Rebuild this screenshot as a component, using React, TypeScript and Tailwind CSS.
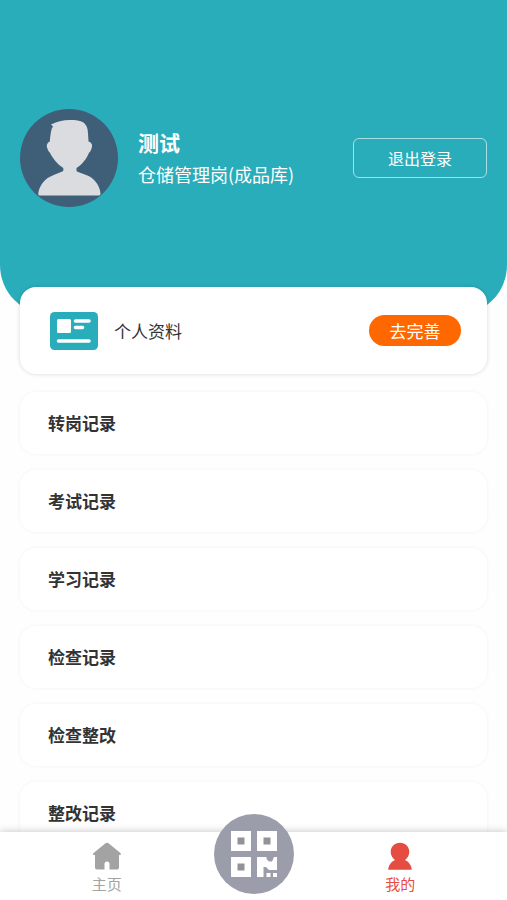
import React from 'react';

const records = ['转岗记录', '考试记录', '学习记录', '检查记录', '检查整改', '整改记录'];

const Avatar: React.FC = () => (
  <svg viewBox="0 0 98 98" className="size-[98px] shrink-0" role="img" aria-label="头像">
    <circle cx="49" cy="49" r="49" fill="#3f5f78" />
    <path
      fill="#dadcdf"
      d="M31 15.500C36 13 43 11 50 11C56 11 60 11.500 63.500 13.500C66.500 16 67.700 19 68 24L68.500 32.500C71 33.500 72.500 35 72 37.500C71.500 40.500 70.500 42.500 69 43.800C67.500 47.500 66 50 63.500 52.800C61.500 55.500 59 57.500 56.500 59V62C59 64 65 65 70 67.800C76 71.500 80 78 80.500 84.500Q80.500 86.500 79 86.500H19.500Q18 86.500 18.300 84.500C19 78 23.500 71 30 67.800C35 65 40 64 43.300 62V59C40 57 37 54 34.500 51C32.500 48.500 31 46 30 43.800C28.500 42.500 27.500 40.500 26.800 37.500C26.500 35 28 33.500 29.800 32.500C30.200 28 30.500 24 31.800 19.500L33 17.500Z"
    />
  </svg>
);

const CardIcon: React.FC = () => (
  <svg viewBox="0 0 48 38" className="h-[38px] w-12 shrink-0" aria-hidden="true">
    <rect width="48" height="38" rx="4.500" fill="#2aadbb" />
    <rect x="7" y="7" width="14" height="14" rx="1.500" fill="#fff" />
    <path d="M25.500 9H39M25.500 15.500H32.500M8.500 29H39" stroke="#fff" strokeWidth="3.600" strokeLinecap="round" />
  </svg>
);

const HomeIcon: React.FC = () => (
  <svg viewBox="0 0 30 28" className="h-7 w-[30px]" aria-hidden="true">
    <path
      fill="currentColor"
      d="M13.500 1.300Q15 .2 16.500 1.300L28.700 11.200Q29.500 12.800 28 13H27V25.500Q27 27.500 25 27.500H17.500V22Q17.500 19.500 15 19.500T12.500 22V27.500H5Q3 27.500 3 25.500V13H1.800Q.4 12.800 1.300 11.200Z"
    />
  </svg>
);

const UserIcon: React.FC = () => (
  <svg viewBox="0 0 30 28" className="h-7 w-[30px]" aria-hidden="true">
    <path
      fill="currentColor"
      d="M15 .8C20.500 .8 24.300 4.800 24.300 9.800C24.300 13.500 22.500 16.300 20 18C23.500 19.500 26.500 23 26.800 27.800H3.200C3.500 23 6.500 19.500 10 18C7.500 16.300 5.700 13.500 5.700 9.800C5.700 4.800 9.500 .8 15 .8Z"
    />
  </svg>
);

const QrIcon: React.FC = () => (
  <svg viewBox="0 0 46 46" className="size-[46px]" aria-hidden="true">
    <g fill="#fff">
      <path d="M0 0H20V20H0Z" />
      <path d="M26 0H46V20H26Z" />
      <path d="M0 26H20V46H0Z" />
      <path d="M26 26H35.500V28L38 30.500H41L43 26H46V39H38L35 36H32.500V46H26Z" />
      <path d="M35.500 42H39.500V46H35.500ZM42 42H46V46H42Z" />
    </g>
    <path fill="#929298" d="M6.500 6.500H13.500V13.500H6.500ZM32.500 6.500H39.500V13.500H32.500ZM6.500 32.500H13.500V39.500H6.500Z" />
  </svg>
);

const App: React.FC = () => {
  return (
    <div className="flex h-screen flex-col bg-[#fefefe] font-['Noto_Sans_CJK_SC',sans-serif] text-[#333]">
      <main className="min-h-0 flex-1 overflow-y-auto [scrollbar-width:none]">
        <header className="flex h-[315px] items-center rounded-b-[50px] bg-[#2aadbb] px-5 text-white">
          <Avatar />
          <div className="ml-5 min-w-0 flex-1">
            <h1 className="text-[21px] leading-8 font-bold">测试</h1>
            <p className="text-lg leading-8">仓储管理岗(成品库)</p>
          </div>
          <button type="button" className="h-10 w-[134px] rounded-md border border-white/60 text-base">
            退出登录
          </button>
        </header>

        <div className="-mt-7 px-5 pb-4">
          {/* Profile card overlaps the header */}
          <section className="flex h-[87px] items-center rounded-2xl bg-white px-[30px] shadow-[0_0_4px_rgba(0,0,0,0.16)]">
            <CardIcon />
            <span className="ml-4 flex-1 text-[17px]">个人资料</span>
            <button type="button" className="-mr-1 h-[31px] w-[92px] rounded-full bg-[#ff6700] text-[17px] text-white">
              去完善
            </button>
          </section>

          <div className="mt-[18px] space-y-4">
            {records.map((name) => (
              <a
                key={name}
                href="#"
                className="flex h-[62px] items-center rounded-2xl bg-white px-7 text-[17px] font-bold shadow-[0_0_4px_rgba(0,0,0,0.05)]"
              >
                {name}
              </a>
            ))}
          </div>
        </div>
      </main>

      <nav className="relative grid h-[68px] shrink-0 grid-cols-[1fr_80px_1fr] bg-white shadow-[0_0_8px_rgba(0,0,0,0.24)]">
        <a href="#" className="flex flex-col items-center pt-2.5 text-[#a3a3a3]">
          <HomeIcon />
          <span className="text-[15px] leading-7">主页</span>
        </a>
        <button
          type="button"
          aria-label="扫一扫"
          className="-mt-[18px] flex size-20 items-center justify-center rounded-full bg-[#9b9eaa]"
        >
          <QrIcon />
        </button>
        <a href="#" className="flex flex-col items-center pt-2.5 text-[#e54d42]">
          <UserIcon />
          <span className="text-[15px] leading-7">我的</span>
        </a>
      </nav>
    </div>
  );
};

export default App;
